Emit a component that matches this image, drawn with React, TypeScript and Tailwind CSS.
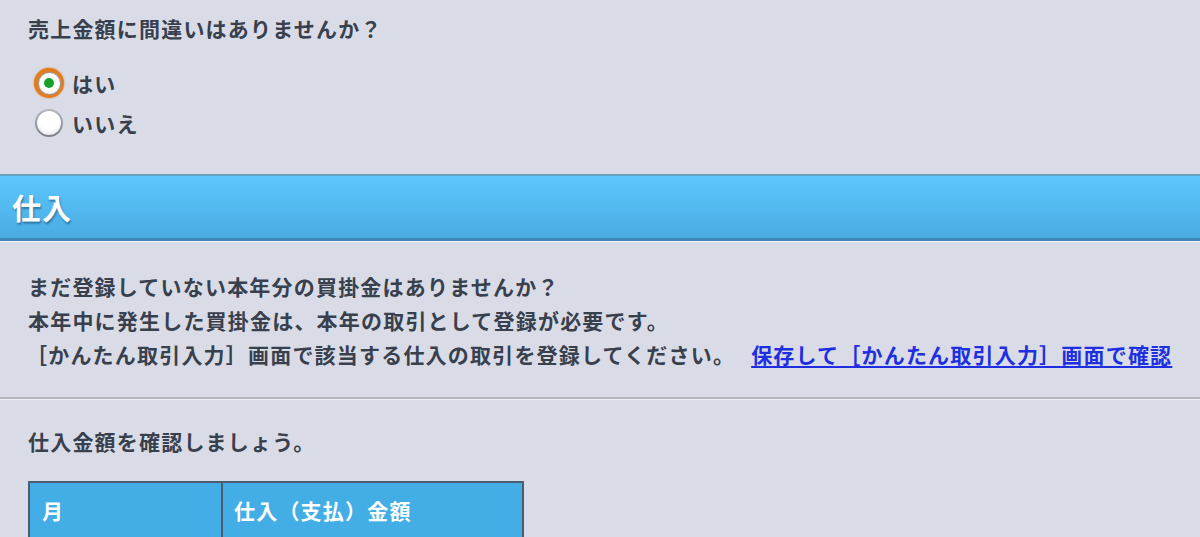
import React from 'react';

const font = {
  fontFamily: '"Noto Sans CJK JP", "Noto Sans", sans-serif',
};

function Radio({ checked }: { checked?: boolean }) {
  if (checked) {
    return (
      <span className="flex h-[30px] w-[30px] items-center justify-center rounded-full bg-[#e27d1f] shadow-[0_0_2px_#e27d1f]">
        <span className="flex h-[23px] w-[23px] items-center justify-center rounded-full border border-[#9a9ea4] bg-[radial-gradient(circle_at_50%_40%,#ffffff_55%,#d6d8dc)]">
          <span className="h-[10px] w-[10px] rounded-full bg-[#16a128]" />
        </span>
      </span>
    );
  }
  return (
    <span className="flex h-[30px] w-[30px] items-center justify-center">
      <span className="flex h-[28px] w-[28px] items-center justify-center rounded-full bg-[linear-gradient(#b4b7bc,#7c8086)] p-[2px]">
        <span className="h-full w-full rounded-full bg-[radial-gradient(circle_at_50%_35%,#ffffff_50%,#dcdde0)]" />
      </span>
    </span>
  );
}

export default function App() {
  return (
    <div
      className="min-h-screen bg-[#d9dce6] text-[21px] font-bold leading-[22px] tracking-[1.2px] text-[#38404d]"
      style={font}
    >
      {/* 売上 confirmation */}
      <section className="px-[28px] pt-[17px]">
        <p>売上金額に間違いはありませんか？</p>
        <div className="mt-[24px] pl-[6px]">
          <label className="flex h-[40px] items-center gap-[8px]">
            <Radio checked />
            <span>はい</span>
          </label>
          <label className="flex h-[40px] items-center gap-[8px]">
            <Radio />
            <span>いいえ</span>
          </label>
        </div>
      </section>

      {/* section header */}
      <div className="mt-[31px] border-b border-b-[#f1f3f7]">
        <div className="border-t-2 border-b-[3px] border-t-[#6b9fc2] border-b-[#3f87b8] bg-[linear-gradient(#5cc7fd,#4aabe2)] pl-[12px]">
          <h2 className="flex h-[62px] items-center text-[29px] leading-none tracking-[1px] text-white [text-shadow:1px_2px_2px_rgba(0,40,80,0.45)]">
            仕入
          </h2>
        </div>
      </div>

      <section className="pl-[28px] pt-[27px] pb-[26px] leading-[34px]">
        <p>まだ登録していない本年分の買掛金はありませんか？</p>
        <p>本年中に発生した買掛金は、本年の取引として登録が必要です。</p>
        <p className="-ml-[2px] whitespace-nowrap">
          ［かんたん取引入力］画面で該当する仕入の取引を登録してください。
          <a href="#" className="ml-[16px] text-[#1d2fe0] underline underline-offset-[3px]">
            保存して［かんたん取引入力］画面で確認
          </a>
        </p>
      </section>

      <div className="border-t-2 border-b border-t-[#b3b6bd] border-b-[#eef0f4]" />

      <section className="px-[28px] pt-[30px]">
        <p>仕入金額を確認しましょう。</p>
        <table className="mt-[29px] w-[496px] border-collapse">
          <thead>
            <tr className="bg-[#43aee5] text-white">
              <th className="w-[193px] border-2 border-[#4b5d6e] px-[12px] pt-[16px] pb-[18px] text-left font-bold">
                月
              </th>
              <th className="border-2 border-[#4b5d6e] px-[11px] pt-[16px] pb-[18px] text-left font-bold">
                仕入（支払）金額
              </th>
            </tr>
          </thead>
        </table>
      </section>
    </div>
  );
}
